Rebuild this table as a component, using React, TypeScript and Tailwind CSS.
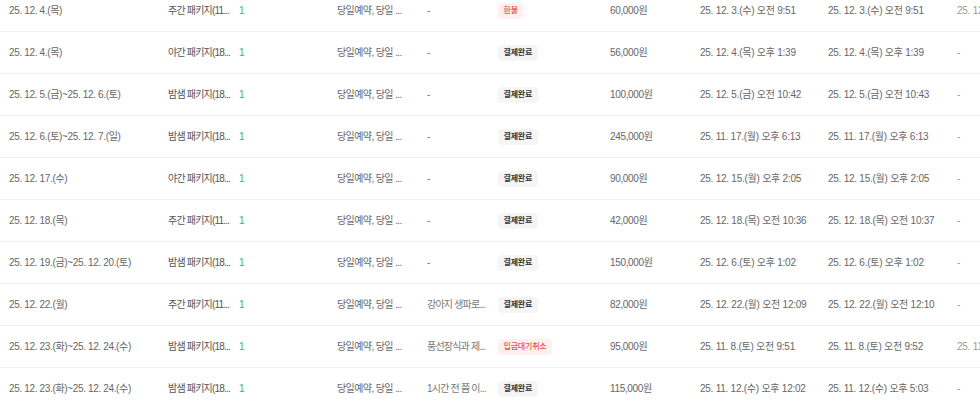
const rows = [
  { date: '25. 12. 4.(목)', pkg: '주간 패키지(11...', opt: '당일예약, 당일 ...', memo: '-', status: '환불', amount: '60,000원', created: '25. 12. 3.(수) 오전 9:51', paid: '25. 12. 3.(수) 오전 9:51', last: '25. 12. 3.(수) 오전 9:52' },
  { date: '25. 12. 4.(목)', pkg: '야간 패키지(18...', opt: '당일예약, 당일 ...', memo: '-', status: '결제완료', amount: '56,000원', created: '25. 12. 4.(목) 오후 1:39', paid: '25. 12. 4.(목) 오후 1:39', last: '-' },
  { date: '25. 12. 5.(금)~25. 12. 6.(토)', pkg: '밤샘 패키지(18...', opt: '당일예약, 당일 ...', memo: '-', status: '결제완료', amount: '100,000원', created: '25. 12. 5.(금) 오전 10:42', paid: '25. 12. 5.(금) 오전 10:43', last: '-' },
  { date: '25. 12. 6.(토)~25. 12. 7.(일)', pkg: '밤샘 패키지(18...', opt: '당일예약, 당일 ...', memo: '-', status: '결제완료', amount: '245,000원', created: '25. 11. 17.(월) 오후 6:13', paid: '25. 11. 17.(월) 오후 6:13', last: '-' },
  { date: '25. 12. 17.(수)', pkg: '야간 패키지(18...', opt: '당일예약, 당일 ...', memo: '-', status: '결제완료', amount: '90,000원', created: '25. 12. 15.(월) 오후 2:05', paid: '25. 12. 15.(월) 오후 2:05', last: '-' },
  { date: '25. 12. 18.(목)', pkg: '주간 패키지(11...', opt: '당일예약, 당일 ...', memo: '-', status: '결제완료', amount: '42,000원', created: '25. 12. 18.(목) 오전 10:36', paid: '25. 12. 18.(목) 오전 10:37', last: '-' },
  { date: '25. 12. 19.(금)~25. 12. 20.(토)', pkg: '밤샘 패키지(18...', opt: '당일예약, 당일 ...', memo: '-', status: '결제완료', amount: '150,000원', created: '25. 12. 6.(토) 오후 1:02', paid: '25. 12. 6.(토) 오후 1:02', last: '-' },
  { date: '25. 12. 22.(월)', pkg: '주간 패키지(11...', opt: '당일예약, 당일 ...', memo: '강아지 생파로...', status: '결제완료', amount: '82,000원', created: '25. 12. 22.(월) 오전 12:09', paid: '25. 12. 22.(월) 오전 12:10', last: '-' },
  { date: '25. 12. 23.(화)~25. 12. 24.(수)', pkg: '밤샘 패키지(18...', opt: '당일예약, 당일 ...', memo: '풍선장식과 제...', status: '입금대기취소', amount: '95,000원', created: '25. 11. 8.(토) 오전 9:51', paid: '25. 11. 8.(토) 오전 9:52', last: '25. 11. 8.(토) 오전 9:53' },
  { date: '25. 12. 23.(화)~25. 12. 24.(수)', pkg: '밤샘 패키지(18...', opt: '당일예약, 당일 ...', memo: '1시간 전 쯤 이...', status: '결제완료', amount: '115,000원', created: '25. 11. 12.(수) 오후 12:02', paid: '25. 11. 12.(수) 오후 5:03', last: '-' },
];

const StatusBadge = ({ status }: { status: string }) => {
  const isRed = status === '환불' || status === '입금대기취소';
  return (
    <span
      className={
        isRed
          ? 'inline-block rounded-[4px] bg-[#fdf0ee] px-[5.5px] py-[3px] text-[8px] leading-[10px] tracking-[-0.2px] font-medium text-[#f0504a]'
          : 'inline-block rounded-[4px] bg-[#f5f5f5] px-[5.5px] py-[3px] text-[8px] leading-[10px] tracking-[-0.2px] font-bold text-[#333]'
      }
    >
      {status}
    </span>
  );
};

const App = () => {
  return (
    <div className="h-[405px] w-[980px] overflow-hidden bg-white font-['Liberation_Sans','Noto_Sans_CJK_KR',sans-serif] text-[10px] tracking-[-0.35px] text-[#666]">
      <div className="-mt-[10px]">
        {rows.map((row, i) => (
          <div key={i} className="flex h-[42px] items-center whitespace-nowrap border-b border-[#f0f0f0]">
            <div className="w-[159px] shrink-0 pl-[9px]">{row.date}</div>
            <div className="w-[71px] shrink-0 pl-[9px] tracking-[-0.8px] text-[#555]">{row.pkg}</div>
            <div className="w-[98px] shrink-0 pl-[9px] text-[#4caf50]">1</div>
            <div className="w-[90px] shrink-0 pl-[9px] tracking-[-0.6px]">{row.opt}</div>
            <div className="w-[71px] shrink-0 pl-[9px] tracking-[-0.8px] text-[#777]">{row.memo}</div>
            <div className="w-[112px] shrink-0 pl-[9px]">
              <StatusBadge status={row.status} />
            </div>
            <div className="w-[90px] shrink-0 pl-[9px]">{row.amount}</div>
            <div className="w-[128px] shrink-0 pl-[9px] tracking-[-0.25px]">{row.created}</div>
            <div className="w-[129px] shrink-0 pl-[9px] tracking-[-0.25px]">{row.paid}</div>
            <div className="w-[120px] shrink-0 pl-[9px] tracking-[-0.25px] text-[#999]">{row.last}</div>
          </div>
        ))}
      </div>
    </div>
  );
};

export default App;
